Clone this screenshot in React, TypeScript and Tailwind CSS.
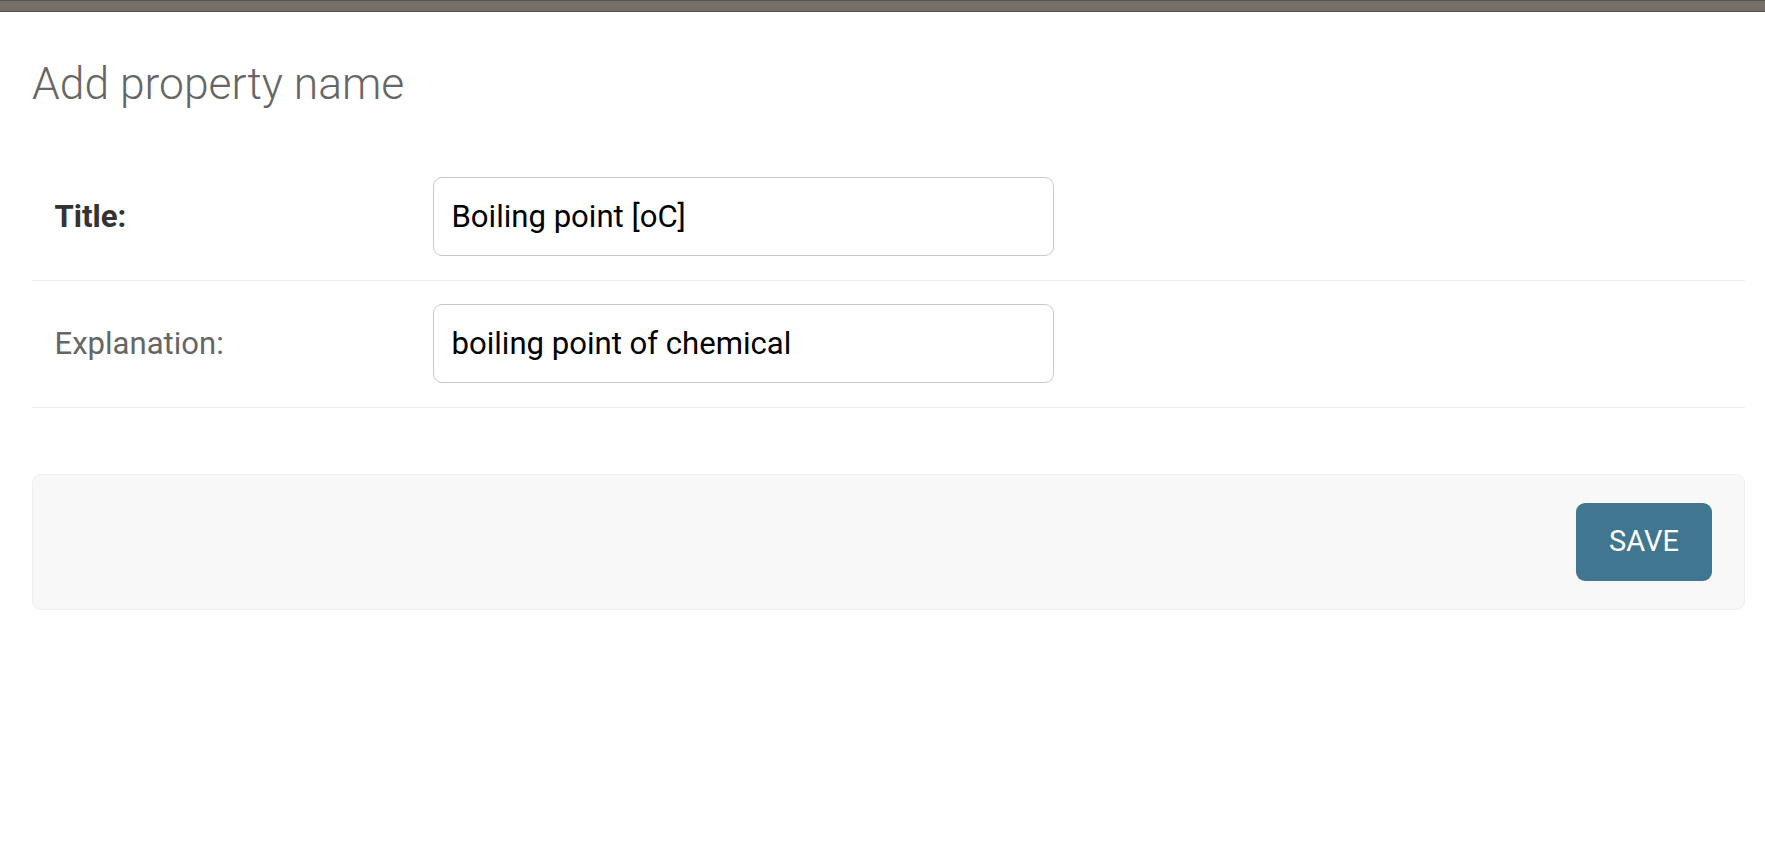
import React from 'react';

type Field = {
  label: string;
  value: string;
  required?: boolean;
};

const fields: Field[] = [
  { label: 'Title:', value: 'Boiling point [oC]', required: true },
  { label: 'Explanation:', value: 'boiling point of chemical' },
];

const App = () => {
  return (
    <div className="min-h-screen bg-white font-['Roboto','Liberation_Sans',sans-serif]">
      {/* header strip */}
      <div className="h-[12px] bg-[#746f68] border-t border-b border-[#56524c]" />

      <div className="pl-[32px] pr-[20px]">
        <h1 className="mt-[45px] mb-[43px] text-[44.4px] leading-[54px] font-light text-[#666]">
          Add property name
        </h1>

        <form onSubmit={(e) => e.preventDefault()}>
          <fieldset>
            {fields.map((field) => (
              <div
                key={field.label}
                className="flex items-center pl-[22.5px] pt-[23px] pb-[24px] border-b border-[#eee]"
              >
                <label
                  className={`w-[378px] shrink-0 text-[31.1px] leading-[38px] ${
                    field.required ? 'font-bold text-[#333]' : 'font-normal text-[#666]'
                  }`}
                >
                  {field.label}
                </label>
                <input
                  type="text"
                  defaultValue={field.value}
                  className="w-[621px] h-[79px] pl-[18px] pr-[14px] text-[31.1px] text-black bg-white border border-[#c8c8c8] rounded-[9px] outline-none"
                />
              </div>
            ))}
          </fieldset>

          <div className="mt-[66px] flex justify-end px-[32px] py-[28px] bg-[#f8f8f8] border border-[#eee] rounded-[9px]">
            <button
              type="submit"
              className="w-[136px] h-[78px] flex items-center justify-center rounded-[9px] bg-[#417690] text-white text-[29px] uppercase"
            >
              Save
            </button>
          </div>
        </form>
      </div>
    </div>
  );
};

export default App;
